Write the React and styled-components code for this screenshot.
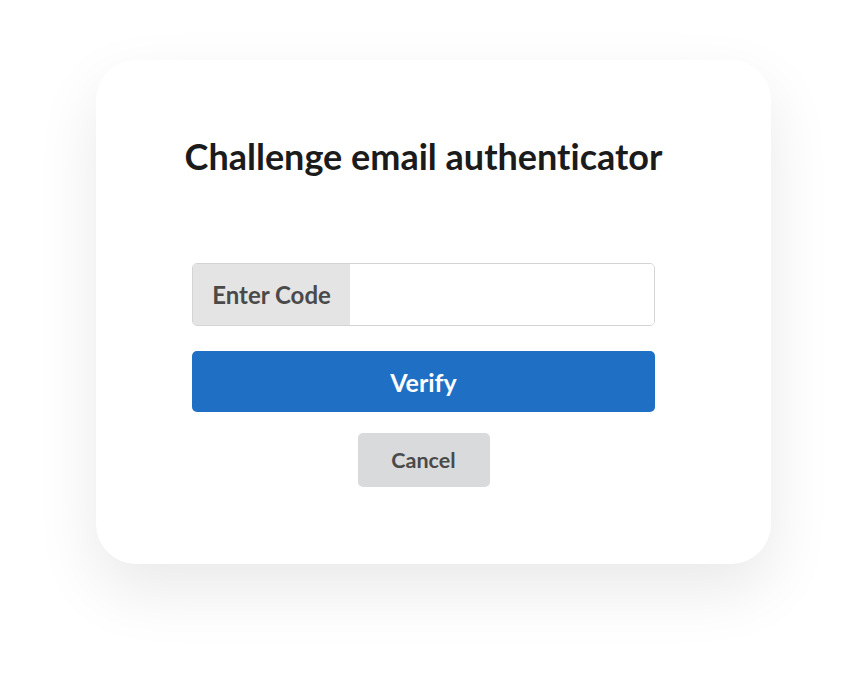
import React, { useState } from 'react';
import styled, { createGlobalStyle } from 'styled-components';

const GlobalStyle = createGlobalStyle`
    html, body {
        margin: 0;
        padding: 0;
        background: #ffffff;
        font-family: Lato, "Open Sans", sans-serif;
        font-variant-ligatures: none;
    }
`;

const Page = styled.div`
    display: flex;
    justify-content: center;
    padding-top: 60px;
    min-height: 696px;
    box-sizing: border-box;
`;

const Card = styled.div`
    width: 675px;
    height: 504px;
    box-sizing: border-box;
    padding: 75px 116px 0 96px;
    background: #ffffff;
    border-radius: 40px;
    box-shadow: 0 26px 64px rgba(0, 0, 0, 0.09);
    display: flex;
    flex-direction: column;
    align-items: stretch;
`;

const Title = styled.h1`
    margin: 0 -60px 86px;
    font-size: 36px;
    font-weight: 700;
    line-height: 42px;
    color: #1b1b1b;
    text-align: center;
    white-space: nowrap;
`;

const InputGroup = styled.div`
    display: flex;
    height: 63px;
    box-sizing: border-box;
    border: 1px solid #d4d4d4;
    border-radius: 5px;
    overflow: hidden;
`;

const Addon = styled.label`
    display: flex;
    align-items: center;
    justify-content: center;
    width: 157px;
    background: #e4e4e4;
    color: #4a4a4a;
    font-size: 24px;
    font-weight: 700;
`;

const CodeInput = styled.input`
    flex: 1;
    border: none;
    outline: none;
    padding: 0 14px;
    font-family: inherit;
    font-size: 20px;
    background: #ffffff;
`;

const Button = styled.button`
    border: none;
    border-radius: 5px;
    font-family: inherit;
    font-weight: 700;
    cursor: pointer;
    background: ${(p) => (p.primary ? '#1f6fc5' : '#d9dadc')};
    color: ${(p) => (p.primary ? '#ffffff' : '#4a4a4a')};
    font-size: ${(p) => (p.primary ? '25px' : '21.5px')};
    height: ${(p) => (p.primary ? '61px' : '54px')};
    width: ${(p) => (p.primary ? '100%' : '132px')};
    margin-top: ${(p) => (p.primary ? '25px' : '21px')};
    align-self: center;
`;

function App() {
    const [code, setCode] = useState('');

    return (
        <Page>
            <GlobalStyle />
            <Card>
                <Title>Challenge email authenticator</Title>
                <InputGroup>
                    <Addon htmlFor="code">Enter Code</Addon>
                    <CodeInput id="code" value={code} onChange={(e) => setCode(e.target.value)} />
                </InputGroup>
                <Button primary>Verify</Button>
                <Button>Cancel</Button>
            </Card>
        </Page>
    );
}

export default App;
